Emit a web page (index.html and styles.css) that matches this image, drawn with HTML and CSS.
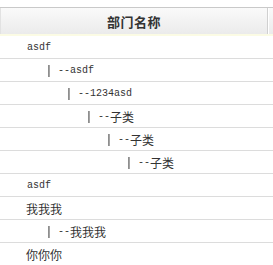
FILE: index.html
```html
<!DOCTYPE html>
<html lang="zh">
<head>
<meta charset="utf-8">
<title>部门名称</title>
<link rel="stylesheet" href="styles.css">
</head>
<body>
<div class="table">
  <div class="head">
    <div class="th">部门名称</div>
    <div class="th th-rest"></div>
  </div>
  <div class="row"><span class="lat">asdf</span></div>
  <div class="row"><span class="lv lv1"><span class="bar">|</span><span class="lat"> --asdf</span></span></div>
  <div class="row"><span class="lv lv2"><span class="bar">|</span><span class="lat"> --1234asd</span></span></div>
  <div class="row"><span class="lv lv3"><span class="bar">|</span><span class="lat"> --</span><span class="cjk">子类</span></span></div>
  <div class="row"><span class="lv lv4"><span class="bar">|</span><span class="lat"> --</span><span class="cjk">子类</span></span></div>
  <div class="row"><span class="lv lv5"><span class="bar">|</span><span class="lat"> --</span><span class="cjk">子类</span></span></div>
  <div class="row"><span class="lat">asdf</span></div>
  <div class="row"><span class="cjk">我我我</span></div>
  <div class="row"><span class="lv lv1"><span class="bar">|</span><span class="lat"> --</span><span class="cjk">我我我</span></span></div>
  <div class="row"><span class="cjk">你你你</span></div>
</div>
</body>
</html>
```
FILE: styles.css
```css
html, body {
  margin: 0;
  padding: 0;
  background: #fff;
}
body {
  padding-top: 7px;
  color: #333;
  font-family: "Noto Sans CJK SC", sans-serif;
}
.table {
  width: 100%;
}
.head {
  display: grid;
  grid-template-columns: 268px 1fr;
  height: 26px;
  border-top: 1px solid #c9c9c9;
  border-bottom: 2px solid #fbfbe4;
}
.th {
  display: flex;
  align-items: center;
  justify-content: center;
  background: linear-gradient(#fafafa, #ebebeb);
  border-left: 1px solid #e2e2e2;
  border-right: 1px solid #d0d0d0;
  font-family: "Noto Sans CJK SC", sans-serif;
  font-weight: bold;
  font-size: 13px;
  color: #333;
  letter-spacing: 0.5px;
}
.th-rest {
  border-left: 1px solid #fff;
  border-right: none;
}
.row {
  display: flex;
  align-items: center;
  height: 22px;
  border-bottom: 1px solid #dcdcdc;
  padding-left: 26px;
  white-space: pre;
}
.lv {
  display: inline-flex;
  align-items: center;
}
.lv1 { margin-left: 20px; }
.lv2 { margin-left: 40px; }
.lv3 { margin-left: 60px; }
.lv4 { margin-left: 80px; }
.lv5 { margin-left: 100px; }
.lat {
  font-family: "Liberation Mono", monospace;
  font-size: 10px;
  color: #333;
}
.row > .lat {
  margin-left: 1px;
}
.cjk {
  font-family: "Noto Sans CJK SC", sans-serif;
  font-size: 12px;
  color: #333;
}
.bar {
  display: inline-block;
  width: 6px;
  text-align: center;
  font-family: "Liberation Sans", sans-serif;
  font-size: 13px;
  line-height: 14px;
  color: #444;
  will-change: transform;
}
```
